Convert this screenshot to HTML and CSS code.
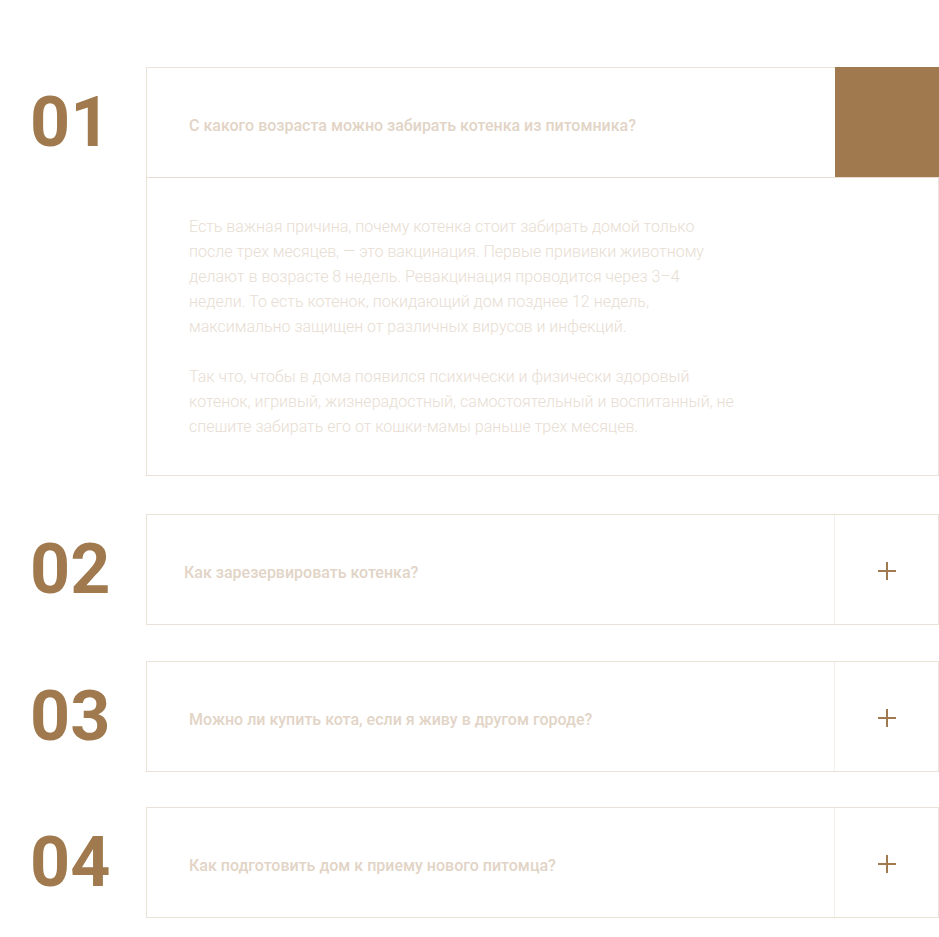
FILE: index.html
```html
<!DOCTYPE html>
<html lang="ru">
<head>
<meta charset="utf-8">
<title>FAQ</title>
<link rel="stylesheet" href="styles.css">
</head>
<body>
<section class="faq">
  <div class="faq-item is-open">
    <div class="faq-num">01</div>
    <div class="faq-card">
      <div class="faq-head">
        <div class="faq-question">С какого возраста можно забирать котенка из питомника?</div>
        <div class="faq-toggle faq-toggle--active"></div>
      </div>
      <div class="faq-body">
        <p>Есть важная причина, почему котенка стоит забирать домой только после трех месяцев, — это вакцинация. Первые прививки животному делают в возрасте 8 недель. Ревакцинация проводится через 3–4 недели. То есть котенок, покидающий дом позднее 12 недель, максимально защищен от различных вирусов и инфекций.</p>
        <p>Так что, чтобы в дома появился психически и физически здоровый котенок, игривый, жизнерадостный, самостоятельный и воспитанный, не спешите забирать его от кошки-мамы раньше трех месяцев.</p>
      </div>
    </div>
  </div>

  <div class="faq-item faq-item--second">
    <div class="faq-num">02</div>
    <div class="faq-card">
      <div class="faq-head">
        <div class="faq-question faq-question--shift">Как зарезервировать котенка?</div>
        <div class="faq-toggle">
          <svg class="plus" width="20" height="20" viewBox="0 0 20 20"><path d="M10 1v18M1 10h18" stroke="#a07a4e" stroke-width="2" fill="none"/></svg>
        </div>
      </div>
    </div>
  </div>

  <div class="faq-item">
    <div class="faq-num">03</div>
    <div class="faq-card">
      <div class="faq-head">
        <div class="faq-question">Можно ли купить кота, если я живу в другом городе?</div>
        <div class="faq-toggle">
          <svg class="plus" width="20" height="20" viewBox="0 0 20 20"><path d="M10 1v18M1 10h18" stroke="#a07a4e" stroke-width="2" fill="none"/></svg>
        </div>
      </div>
    </div>
  </div>

  <div class="faq-item faq-item--last">
    <div class="faq-num">04</div>
    <div class="faq-card">
      <div class="faq-head">
        <div class="faq-question">Как подготовить дом к приему нового питомца?</div>
        <div class="faq-toggle">
          <svg class="plus" width="20" height="20" viewBox="0 0 20 20"><path d="M10 1v18M1 10h18" stroke="#a07a4e" stroke-width="2" fill="none"/></svg>
        </div>
      </div>
    </div>
  </div>
</section>
</body>
</html>
```
FILE: styles.css
```css
* { box-sizing: border-box; }
html, body { margin: 0; padding: 0; background: #ffffff; }
body { font-family: Roboto, "Liberation Sans", sans-serif; }

.faq {
  display: flex;
  flex-direction: column;
  gap: 36px;
  padding: 67px 0 0 0;
}

.faq-item {
  display: flex;
  align-items: flex-start;
}
.faq-item--second { margin-top: 2px; }
.faq-item--last { margin-top: -1px; }

.faq-num {
  width: 146px;
  flex: 0 0 146px;
  height: 110px;
  display: flex;
  align-items: center;
  padding-left: 30px;
  font-size: 70px;
  font-weight: 700;
  color: #a07a4e;
  line-height: 1;
}

.faq-card {
  flex: 1;
  border: 1px solid #ebe1d7;
}

.faq-head {
  display: flex;
  height: 109px;
}

.is-open .faq-head { border-bottom: 1px solid #e6dcd2; height: 110px; }

.faq-question {
  flex: 1;
  display: flex;
  align-items: center;
  padding-left: 42px;
  padding-top: 5px;
  font-size: 16px;
  font-weight: 500;
  color: #e2d4c6;
}
.faq-question--shift { padding-left: 37px; }

.faq-toggle {
  width: 104px;
  flex: 0 0 104px;
  border-left: 1px solid #f3eee8;
  display: flex;
  align-items: center;
  justify-content: center;
  padding-top: 2px;
}
.faq-toggle--active {
  background: #a07a4e;
  border-left: none;
  margin: -1px -1px 0 0;
  height: 110px;
}

.faq-body {
  padding: 36px 0 36px 42px;
}
.faq-body p {
  margin: 0 0 25px;
  max-width: 546px;
  font-size: 16px;
  font-weight: 300;
  line-height: 25px;
  color: #e8ddd2;
}
.faq-body p:last-child { margin-bottom: 0; }

.plus { display: block; }
```
